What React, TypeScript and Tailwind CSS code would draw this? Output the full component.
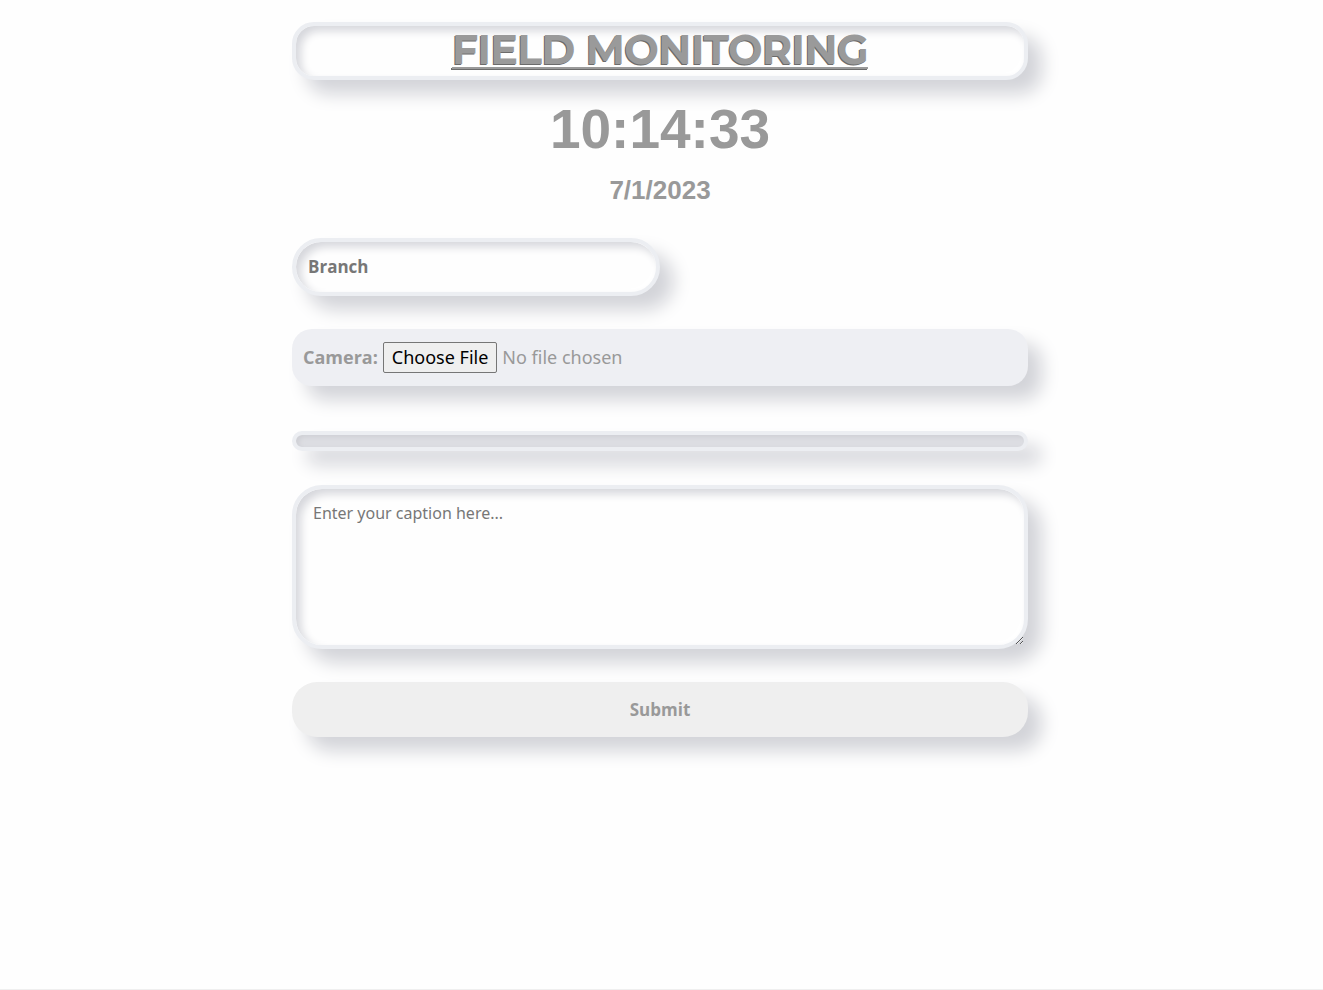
import { useState } from 'react';

const well =
  'border-4 border-[#eceef2] bg-[#fefefe] shadow-[inset_5px_5px_8px_#d6d7dc,inset_-3px_-3px_6px_#ffffff,14px_14px_18px_#d3d4d9]';

export default function App() {
  const [caption, setCaption] = useState('');

  return (
    <div className="min-h-[990px] bg-[#fefefe] border-b border-[#efefef] pr-[3px]">
      <div className="mx-auto w-[736px] pt-[22px] flex flex-col">
        <div className={`${well} h-[58px] rounded-[22px] flex items-center justify-center`}>
          <h1 className="-mt-[4px] font-['Montserrat','Lato','Open_Sans',sans-serif] font-bold text-[41px] leading-none text-[#9a9a9a] underline decoration-[2px] underline-offset-[3px] tracking-[-0.6px] [text-shadow:-1px_1px_0_#6b6b6b]">
            FIELD MONITORING
          </h1>
        </div>

        <div className="mt-[22px] text-center font-['Liberation_Sans',Arial,sans-serif] font-bold text-[55px] leading-none text-[#999999]">
          10:14:33
        </div>
        <div className="mt-[20px] text-center font-['Liberation_Sans',Arial,sans-serif] font-bold text-[26px] leading-none text-[#999999]">
          7/1/2023
        </div>

        <div className={`${well} mt-[35px] w-[368px] h-[58px] rounded-full flex items-center px-3`}>
          <span className="font-['Open_Sans','Noto_Sans',sans-serif] font-bold text-[17px] text-[#777777]">Branch</span>
        </div>

        <div className="mt-[33px] h-[57px] rounded-[20px] bg-[#eeeff3] shadow-[14px_14px_18px_#d3d4d9] flex items-center px-[11px] gap-[5px]">
          <span className="font-['Open_Sans','Noto_Sans',sans-serif] font-bold text-[18px] text-[#999999]">Camera:</span>
          <input
            type="file"
            className="font-['Noto_Sans',sans-serif] text-[18px] text-[#999999] file:mr-[5px] file:px-[8px] file:py-[1px] file:border file:border-[#767676] file:rounded-[2px] file:bg-[#efefef] file:text-black file:text-[18px] file:font-['Noto_Sans',sans-serif]"
          />
        </div>

        <div className="mt-[45px] h-[20px] rounded-full border-4 border-[#eceef2] bg-[#dcdde2] shadow-[inset_3px_2px_4px_#cfd0d5,14px_14px_18px_#d6d7dc]" />

        <textarea
          value={caption}
          onChange={(e) => setCaption(e.target.value)}
          placeholder="Enter your caption here..."
          className={`${well} mt-[34px] h-[164px] rounded-[30px] px-[17px] py-[12px] font-['Noto_Sans',sans-serif] text-[16px] text-[#555] placeholder:text-[#777777] outline-none`}
        />

        <button className="mt-[33px] h-[55px] rounded-[25px] bg-[#efefef] shadow-[14px_14px_18px_#d3d4d9] font-['Open_Sans','Noto_Sans',sans-serif] font-bold text-[17px] text-[#999999]">
          Submit
        </button>
      </div>
    </div>
  );
}
